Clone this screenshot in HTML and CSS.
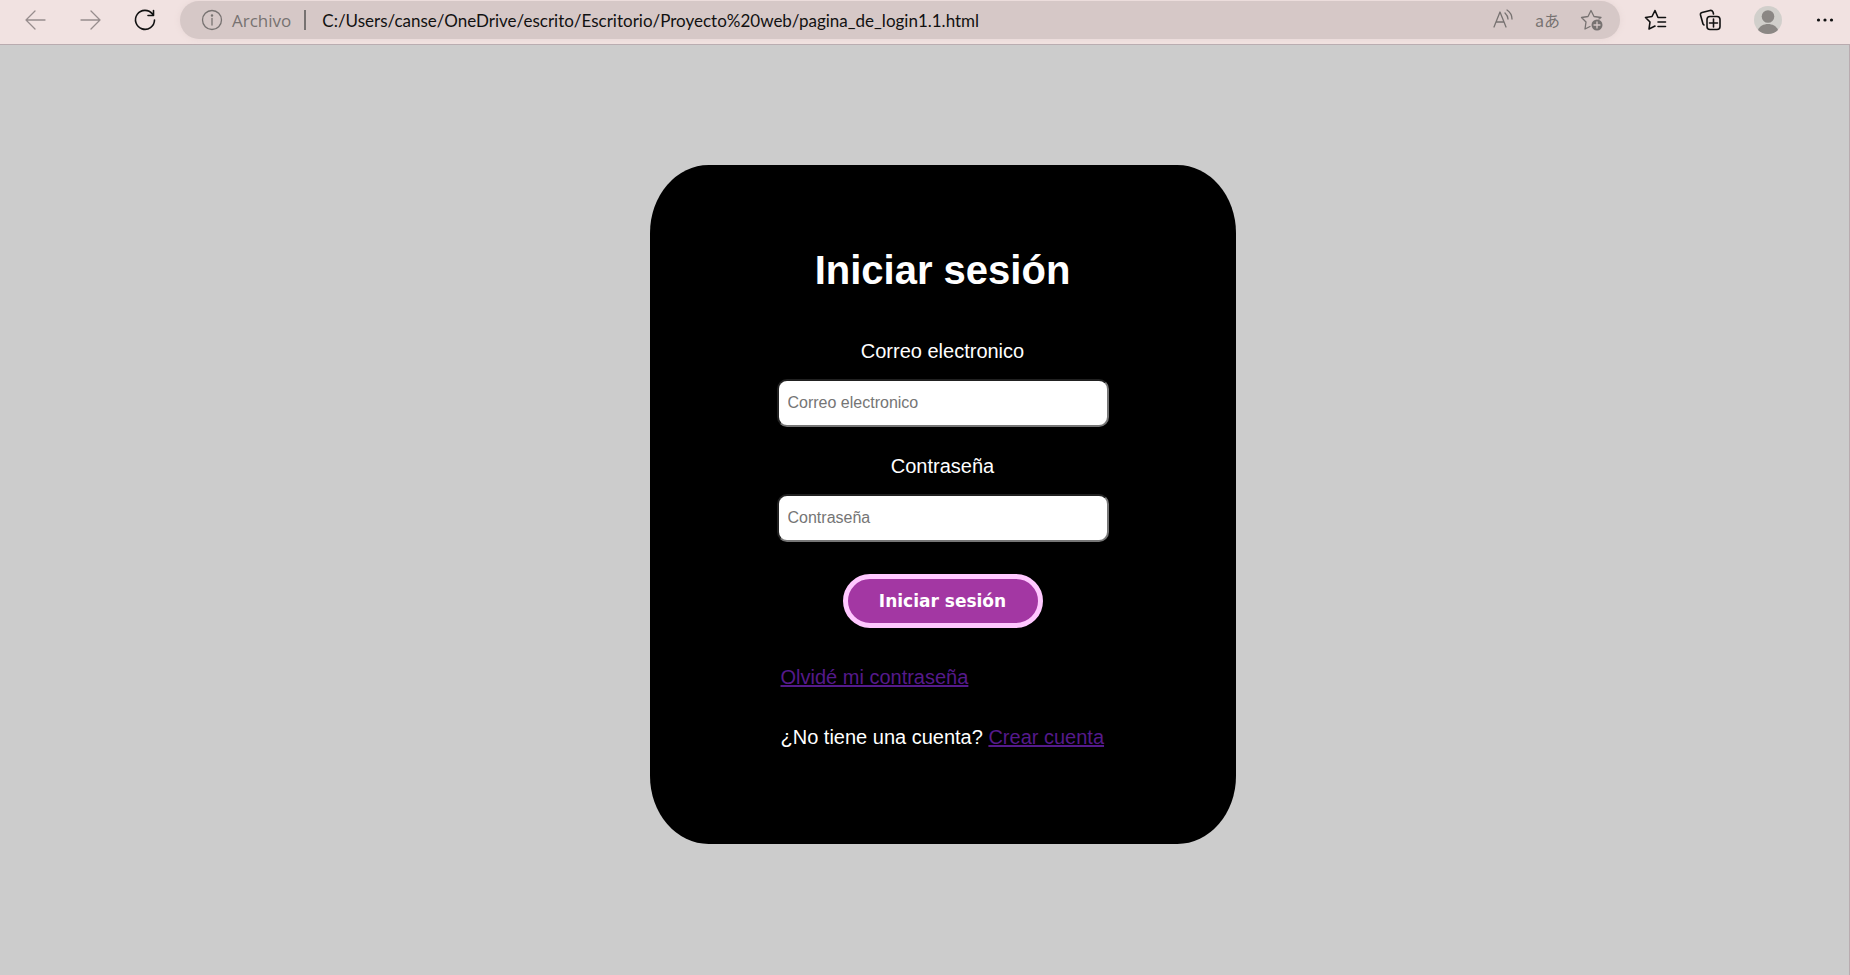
FILE: index.html
```html
<!DOCTYPE html>
<html lang="es">
<head>
<meta charset="utf-8">
<title>Iniciar sesión</title>
<link rel="stylesheet" href="styles.css">
</head>
<body>
<header class="toolbar">
  <nav class="nav">
    <button class="icon-btn muted" aria-label="Atrás"><svg width="24" height="24" viewBox="0 0 24 24"><path d="M22 12H3M12 3L3 12L12 21"/></svg></button>
    <button class="icon-btn muted" aria-label="Adelante"><svg width="24" height="24" viewBox="0 0 24 24"><path d="M3 12H22M13 3L22 12L13 21"/></svg></button>
    <button class="icon-btn" aria-label="Actualizar"><svg width="24" height="24" viewBox="0 0 24 24" class="bold"><path d="M19.500 6A9.500 9.500 0 1 0 21.500 12M20.500 2.500V7.500H15"/></svg></button>
  </nav>
  <div class="address">
    <button class="site-info"><svg width="24" height="24" viewBox="0 0 24 24"><circle cx="12" cy="12" r="9.500"/><path d="M12 10.500V17"/><circle cx="12" cy="7.500" r="0.600"/></svg>Archivo</button>
    <span class="divider"></span>
    <input class="url" type="text" aria-label="Dirección" value="C:/Users/canse/OneDrive/escrito/Escritorio/Proyecto%20web/pagina_de_login1.1.html">
    <div class="address-tools">
      <button class="icon-btn gray" aria-label="Leer en voz alta"><svg width="24" height="24" viewBox="0 0 24 24"><path d="M3 19L9 4L15 19M5 14H13M14 5C16 7 17 9 17 11M16 2C19 4 21 7 21 11"/></svg></button>
      <button class="icon-btn gray translate" aria-label="Traducir">aあ</button>
      <button class="icon-btn gray" aria-label="Agregar a favoritos"><svg width="24" height="24" viewBox="0 0 24 24"><path d="M10 18.500L5 21L6 14L1.500 9.500L8 8.500L11 2.500L14 8.500L21 9.500L19 11"/><circle cx="17" cy="17" r="5.500" class="solid"/><path d="M17 14V20M14 17H20" class="plus"/></svg></button>
    </div>
  </div>
  <div class="actions">
    <button class="icon-btn" aria-label="Favoritos"><svg width="24" height="24" viewBox="0 0 24 24" class="bold"><path d="M21.500 9.500H14L11 2.500L8 8.500L1.500 9.500L6 14L5 21L11 18M14 14H21.500M14 18.500H21.500"/></svg></button>
    <button class="icon-btn" aria-label="Colecciones"><svg width="24" height="24" viewBox="0 0 24 24" class="bold"><rect x="8" y="8.500" width="13" height="13" rx="3"/><path d="M14.500 11V19M10.500 15H18.500M5 17L4 16L1.500 7Q1 5 3 4.500L11 2.500Q13 2 14 4L14.500 6"/></svg></button>
    <button class="icon-btn" aria-label="Perfil"><svg width="28" height="28" viewBox="0 0 28 28"><g stroke="none"><circle cx="14" cy="14" r="14" fill="#d1cfcb"/><circle cx="14" cy="10.500" r="6.300" fill="#8b8784"/><path d="M4 24C7 16 21 16 24 24Q20 28 14 28T4 24Z" fill="#8b8784"/></g></svg></button>
    <button class="icon-btn" aria-label="Más"><svg width="24" height="24" viewBox="0 0 24 24"><g fill="#111" stroke="none"><circle cx="5.500" cy="12" r="1.600"/><circle cx="12" cy="12" r="1.600"/><circle cx="18.500" cy="12" r="1.600"/></g></svg></button>
  </div>
</header>
<main class="page">
  <form class="card">
    <h1 class="title">Iniciar sesión</h1>
    <label class="label" for="email">Correo electronico</label>
    <input class="field" id="email" type="email" placeholder="Correo electronico">
    <label class="label" for="password">Contraseña</label>
    <input class="field" id="password" type="password" placeholder="Contraseña">
    <button class="submit" type="submit">Iniciar sesión</button>
    <div class="links">
      <p class="line"><a class="link" href="#">Olvidé mi contraseña</a></p>
      <p class="line">¿No tiene una cuenta? <a class="link" href="#">Crear cuenta</a></p>
    </div>
  </form>
</main>
</body>
</html>
```
FILE: styles.css
```css
* { box-sizing: border-box; }

body {
  margin: 0;
  min-height: 100vh;
  display: flex;
  flex-direction: column;
  background: #cccccc;
  font-family: "Liberation Sans", Arial, sans-serif;
}

button {
  border: 0;
  padding: 0;
  background: none;
  color: inherit;
  font: inherit;
}

svg {
  display: block;
  fill: none;
  stroke: currentColor;
  stroke-width: 1.3;
  stroke-linecap: round;
  stroke-linejoin: round;
}

.bold { stroke-width: 1.6; }
.solid { fill: currentColor; stroke: none; }
.plus { stroke: #d6c8c7; }

.toolbar {
  display: flex;
  align-items: flex-start;
  height: 45px;
  padding: 1px 13px 0 23px;
  background: #f1e2e1;
  border-bottom: 1px solid #b9abaf;
}

.nav {
  display: flex;
  align-items: center;
  gap: 31px;
  height: 38px;
  width: 157px;
}

.icon-btn {
  display: flex;
  align-items: center;
  justify-content: center;
  min-width: 24px;
  color: #111111;
}

.muted { color: #978d8d; }
.gray { color: #777271; }

.address {
  flex: 1;
  display: flex;
  align-items: center;
  height: 38px;
  padding: 0 16px 0 20px;
  border-radius: 19px;
  background: #d6c8c7;
  box-shadow: 0 0 6px #e6d6d5;
}

.site-info {
  display: flex;
  align-items: center;
  gap: 8px;
  color: #777271;
  font-family: "Open Sans", sans-serif;
  font-size: 17px;
}

.divider {
  width: 2px;
  height: 20px;
  margin: 0 16px 0 13px;
  background: #777271;
}

.url {
  flex: 1;
  min-width: 0;
  padding: 0;
  border: 0;
  background: none;
  color: #111111;
  font-family: Lato, "Open Sans", sans-serif;
  font-size: 17px;
}

.address-tools { display: flex; gap: 20px; }

.translate {
  font-family: "Noto Sans CJK JP", sans-serif;
  font-size: 16px;
  line-height: 24px;
}

.actions {
  display: flex;
  align-items: center;
  gap: 31px;
  height: 38px;
  padding-left: 24px;
}

.page {
  flex: 1;
  display: flex;
  align-items: flex-start;
  justify-content: center;
  padding: 120px 0 120px 36px;
  border-right: 1px solid #b9abaf;
}

.card {
  display: flex;
  flex-direction: column;
  align-items: center;
  padding: 82px 127px 95px;
  border-radius: 10%;
  background: #000000;
  color: #ffffff;
  font-size: 20px;
}

.title {
  margin: 0 0 46px;
  font-size: 40px;
  line-height: 46px;
}

.label {
  margin-bottom: 16px;
  line-height: 24px;
}

.field {
  width: 332px;
  height: 48px;
  margin-bottom: 27px;
  padding: 0 9px;
  border: 2px inset #767676;
  border-radius: 10px;
  background: #ffffff;
  color: #000000;
  font-family: inherit;
  font-size: 16px;
}

.field::placeholder { color: #757575; }

.submit {
  width: 200px;
  height: 54px;
  margin: 5px 0 37px;
  border: 5px solid #ffc8ff;
  border-radius: 27px;
  background: #a337a3;
  color: #ffffff;
  font-family: "Arial Black", "DejaVu Sans", sans-serif;
  font-size: 17px;
  font-weight: 900;
}

.links { width: 324px; white-space: nowrap; }
.line { margin: 0 0 36px; line-height: 24px; }
.line:last-child { margin-bottom: 0; }
.link { color: #551a8b; text-decoration: underline; }
```
